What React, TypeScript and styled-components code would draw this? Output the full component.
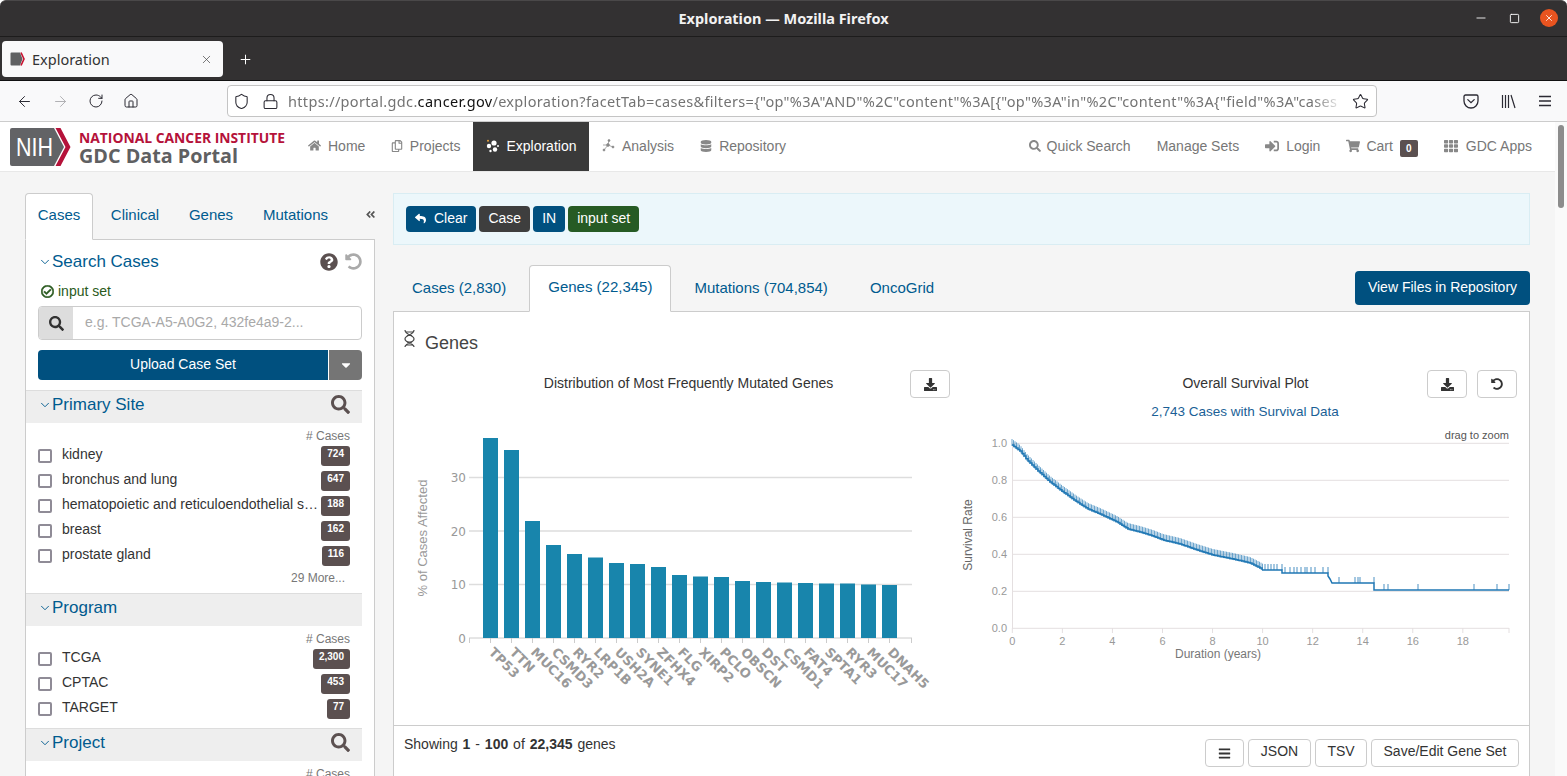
import React, { FC } from 'react'
import styled, { createGlobalStyle } from 'styled-components'
import {
	FaAngleDoubleLeft,
	FaBars,
	FaCaretDown,
	FaDatabase,
	FaDownload,
	FaHome,
	FaQuestionCircle,
	FaRegCheckCircle,
	FaRegCopy,
	FaReply,
	FaSearch,
	FaShoppingCart,
	FaSignInAlt,
	FaTh,
	FaUndoAlt,
} from 'react-icons/fa'
import { ArrowLeft, ArrowRight, ChevronDown, Home, Lock, Minus, Plus, RotateCw, Shield, Square, Star, X } from 'lucide-react'

const BLUE = '#00507f'
const LINK = '#005b8f'
const CHROME_FONT = `'Noto Sans', 'Open Sans', sans-serif`

const GlobalStyle = createGlobalStyle`
	html, body {
		margin: 0;
		height: 776px;
		overflow: hidden;
		background: #fff;
		font-family: 'Liberation Sans', Arial, sans-serif;
		font-size: 14px;
		color: #333;
	}
	* { box-sizing: border-box; }
`

/* Firefox window */
const TitleBar = styled.div`
	height: 37px;
	padding-bottom: 2px;
	background: #333132;
	border-top: 1px solid #4a4849;
	border-bottom: 1px solid #1d1c1c;
	border-radius: 6px 6px 0 0;
	display: flex;
	align-items: center;
	justify-content: center;
	position: relative;
	color: #f2f2f2;
	font: 700 14.5px ${CHROME_FONT};
`
const WindowControls = styled.div`
	position: absolute;
	right: 9px;
	top: 8px;
	display: flex;
	align-items: center;
	gap: 21px;
	color: #fff;
`
const CloseDot = styled.span`
	width: 18px;
	height: 18px;
	margin-left: -1px;
	border-radius: 50%;
	background: #e95420;
	display: flex;
	align-items: center;
	justify-content: center;
`
const TabBar = styled.div`
	height: 44px;
	background: #333132;
	border-bottom: 1px solid #111;
	display: flex;
	align-items: center;
	padding: 1px 0 0 2px;
	color: #fff;
`
const BrowserTab = styled.div`
	width: 221px;
	height: 36px;
	background: #f9f9fa;
	border-radius: 4px;
	color: #333;
	font: 14.5px ${CHROME_FONT};
	display: flex;
	align-items: center;
	padding: 0 10px 0 8px;
	gap: 6px;
	span { flex: 1; }
`
const NewTab = styled.div`
	margin-left: 15px;
	display: flex;
`
const Toolbar = styled.div`
	height: 41px;
	background: #f9f9fa;
	border-bottom: 1px solid #ccc;
	display: flex;
	align-items: center;
	padding-left: 16px;
	color: #2b2a33;
`
const ToolIcon = styled.span<{ $w: number; $dim?: boolean }>`
	width: ${p => p.$w}px;
	display: flex;
	color: ${p => (p.$dim ? '#b0b0b3' : '#2b2a33')};
`
const UrlBar = styled.div`
	width: 1150px;
	height: 32px;
	margin-left: -1px;
	background: #fff;
	border: 1px solid #c4c4c4;
	border-radius: 4px;
	display: flex;
	align-items: center;
	padding: 0 7px 0 5px;
	gap: 12px;
`
const UrlText = styled.div`
	flex: 1;
	margin: 0 -4px 0 -3px;
	white-space: nowrap;
	overflow: hidden;
	font: 14.5px ${CHROME_FONT};
	color: #737373;
	letter-spacing: 0.33px;
	-webkit-mask-image: linear-gradient(to right, #000 97%, transparent);
	mask-image: linear-gradient(to right, #000 97%, transparent);
	b { font-weight: 400; color: #111; }
`
const ToolRight = styled.div`
	display: flex;
	align-items: center;
	margin-left: 86px;
	gap: 22px;
`

/* page */
const Page = styled.div`
	display: flex;
	height: 654px;
`
const PageMain = styled.div`
	width: 1555px;
	background: #f5f5f5;
	overflow: hidden;
`
const ScrollTrack = styled.div`
	width: 12px;
	background: #fafafa;
	padding: 3px 3px 0 3px;
`
const ScrollThumb = styled.div`
	height: 83px;
	background: #8c8c8c;
	border-radius: 3px;
`
const Header = styled.header`
	height: 50px;
	background: #fff;
	border-bottom: 1px solid #e8e8e8;
	display: flex;
	align-items: stretch;
	padding-left: 10px;
`
const Logo = styled.svg`
	width: 280px;
	height: 50px;
	flex: none;
`
const Nav = styled.nav<{ $right?: boolean }>`
	display: flex;
	align-items: stretch;
	margin-left: ${p => (p.$right ? 'auto' : '5px')};
	padding-right: ${p => (p.$right ? '10px' : '0')};
`
const NavItem = styled.div<{ $active?: boolean; $px?: number; $gap?: number }>`
	display: flex;
	align-items: center;
	gap: ${p => p.$gap ?? 7}px;
	padding: 0 ${p => p.$px ?? 13}px 2px;
	color: ${p => (p.$active ? '#fff' : '#777')};
	background: ${p => (p.$active ? '#3a3a3a' : 'transparent')};
	font-size: 14px;
	svg { flex: none; }
`
const CartBadge = styled.span`
	background: #5b5050;
	color: #fff;
	font-size: 10px;
	font-weight: 700;
	border-radius: 2px;
	width: 18px;
	height: 17px;
	margin: 5px 0 0 1px;
	display: flex;
	align-items: center;
	justify-content: center;
`
const Body = styled.div`
	display: flex;
	gap: 18px;
	padding: 21px 25px 0;
`

/* left facets */
const Sidebar = styled.aside`
	width: 350px;
	flex: none;
`
const SideTabs = styled.div`
	display: flex;
	height: 47px;
	position: relative;
	z-index: 1;
`
const SideTab = styled.div<{ $active?: boolean; $w: number }>`
	width: ${p => p.$w}px;
	display: flex;
	align-items: center;
	justify-content: center;
	padding-bottom: 5px;
	font-size: 15px;
	color: ${LINK};
	background: ${p => (p.$active ? '#fff' : 'transparent')};
	border: ${p => (p.$active ? '1px solid #ccc' : '1px solid transparent')};
	border-bottom: ${p => (p.$active ? '1px solid #fff' : 'none')};
	border-radius: 4px 4px 0 0;
`
const Collapse = styled.div`
	margin-left: auto;
	display: flex;
	align-items: center;
	padding: 0 0 4px;
	margin-right: -1px;
	color: #555;
	width: 11px;
`
const SidePanel = styled.div`
	margin-top: -1px;
	background: #fff;
	border: 1px solid #ccc;
	border-bottom: none;
	height: 540px;
	overflow: hidden;
`
const SearchBlock = styled.div`
	width: 336px;
	padding: 10px 0 10px 12px;
`
const SearchHead = styled.div`
	display: flex;
	align-items: center;
	height: 22px;
	padding-top: 1px;
`
const FacetTitle = styled.div`
	flex: 1;
	display: flex;
	align-items: center;
	color: ${LINK};
	font-size: 17px;
	svg { flex: none; color: ${LINK}; margin-right: 0; }
`
const HeadIcons = styled.div`
	display: flex;
	align-items: center;
	gap: 7px;
	color: #5b5050;
`
const InputSet = styled.div`
	display: flex;
	align-items: center;
	height: 18px;
	margin: 10px 0 6px 3px;
	gap: 4px;
	color: #2a5a20;
	font-size: 14px;
	svg { stroke: currentColor; stroke-width: 24px; }
`
const SearchInput = styled.div`
	display: flex;
	height: 34px;
	border: 1px solid #ccc;
	border-radius: 4px;
	overflow: hidden;
`
const SearchAddon = styled.div`
	width: 34px;
	background: #ddd;
	display: flex;
	align-items: center;
	justify-content: center;
	color: #333;
`
const Placeholder = styled.div`
	flex: 1;
	padding-left: 12px;
	line-height: 31px;
	color: #a9a9a9;
	font-size: 14px;
	white-space: nowrap;
`
const UploadRow = styled.div`
	display: flex;
	height: 30px;
	margin-top: 10px;
`
const UploadButton = styled.div`
	flex: 1;
	background: ${BLUE};
	color: #fff;
	border-radius: 4px 0 0 4px;
	display: flex;
	align-items: center;
	justify-content: center;
	padding-bottom: 2px;
	font-size: 14px;
`
const UploadCaret = styled.div`
	width: 33px;
	margin-left: 1px;
	background: #757575;
	color: #fff;
	border-radius: 0 4px 4px 0;
	display: flex;
	align-items: center;
	justify-content: center;
`
const FacetHead = styled.div`
	width: 336px;
	height: 33px;
	background: #eee;
	border-top: 1px solid #ddd;
	padding: 0 12px 5px 12px;
	display: flex;
	align-items: center;
`
const FacetBody = styled.div<{ $pb: number }>`
	width: 336px;
	height: ${p => (p.$pb < 0 ? '14px' : 'auto')};
	overflow: hidden;
	padding: 6px 12px ${p => Math.max(p.$pb, 0)}px 12px;
`
const CasesLabel = styled.div`
	text-align: right;
	font-size: 12px;
	line-height: 14px;
	color: #777;
	margin-bottom: 3px;
`
const FacetRow = styled.div`
	display: flex;
	align-items: flex-start;
	height: 25px;
	color: #333;
`
const Check = styled.span`
	width: 14px;
	height: 14px;
	margin-top: 3px;
	border: 2px solid #8f8b96;
	border-radius: 2px;
	flex: none;
`
const RowLabel = styled.span`
	flex: 1;
	min-width: 0;
	margin-left: 10px;
	line-height: 16px;
	white-space: nowrap;
`
const CountBadge = styled.span`
	height: 20px;
	padding: 2px 6px 0;
	background: #5b5050;
	color: #fff;
	font-size: 10px;
	font-weight: 700;
	line-height: 11px;
	border-radius: 3px;
	flex: none;
`
const MoreLink = styled.div`
	text-align: right;
	padding-right: 5px;
	font-size: 12px;
	line-height: 14px;
	color: #777;
`

/* right column */
const Content = styled.main`
	flex: 1;
	min-width: 0;
`
const FilterBar = styled.div`
	height: 52px;
	background: #ecf7fb;
	border: 1px solid #d9edf3;
	display: flex;
	align-items: flex-start;
	gap: 3px;
	padding: 12px 0 0 12px;
`
const Chip = styled.div<{ $bg: string }>`
	height: 26px;
	padding: 0 9px 2px;
	background: ${p => p.$bg};
	color: #fff;
	border-radius: 4px;
	display: flex;
	align-items: center;
	gap: 8px;
`
const ViewTabs = styled.div`
	display: flex;
	height: 47px;
	margin-top: 20px;
	position: relative;
	z-index: 1;
`
const ViewTab = styled.div<{ $active?: boolean }>`
	height: 47px;
	padding: 0 18px 4px;
	margin-right: 4px;
	display: flex;
	align-items: center;
	font-size: 15px;
	color: ${LINK};
	background: ${p => (p.$active ? '#fff' : 'transparent')};
	border: 1px solid ${p => (p.$active ? '#ccc' : 'transparent')};
	border-bottom: ${p => (p.$active ? '1px solid #fff' : 'none')};
	border-radius: 4px 4px 0 0;
`
const ViewFiles = styled.div`
	margin: 6px 0 0 auto;
	width: 175px;
	height: 34px;
	padding-bottom: 2px;
	background: ${BLUE};
	color: #fff;
	border-radius: 4px;
	display: flex;
	align-items: center;
	justify-content: center;
`
const Panel = styled.section`
	margin-top: -1px;
	background: #fff;
	border: 1px solid #ccc;
	border-bottom: none;
	height: 470px;
`
const PanelHead = styled.div`
	height: 58px;
	display: flex;
	align-items: center;
	padding: 5px 0 0 9px;
	gap: 9px;
	font-size: 18px;
	color: #444;
	svg { margin-bottom: 10px; }
`
const ChartsRow = styled.div`
	height: 355px;
	display: grid;
	grid-template-columns: 547px 557px;
	column-gap: 10px;
	padding-left: 9px;
`
const ChartCol = styled.div`
	display: flex;
	flex-direction: column;
`
const ChartHead = styled.div`
	display: flex;
	align-items: flex-start;
	height: 28px;
	gap: 10px;
`
const ChartTitle = styled.div<{ $pl: number }>`
	flex: 1;
	padding-left: ${p => p.$pl}px;
	text-align: center;
	line-height: 26px;
	color: #333;
`
const ChartSub = styled.div`
	height: 26px;
	text-align: center;
	line-height: 27px;
	padding-left: 13px;
	font-size: 13.5px;
	color: #1a5f96;
`
const Btn = styled.div<{ $w: number }>`
	width: ${p => p.$w}px;
	height: 28px;
	background: #fff;
	border: 1px solid #ccc;
	border-radius: 4px;
	display: flex;
	align-items: center;
	justify-content: center;
	color: #333;
`
const FootBtn = styled(Btn)`
	padding-bottom: 4px;
`
const Chart = styled.svg`
	display: block;
	width: 100%;
	height: 300px;
`
const PanelFoot = styled.div`
	height: 60px;
	border-top: 1px solid #ccc;
	display: flex;
	align-items: flex-start;
	padding: 13px 10px 0 10px;
	b { font-weight: 700; }
`
const Showing = styled.div`
	flex: 1;
	line-height: 10px;
	word-spacing: 1px;
	white-space: pre;
`
const FootBtns = styled.div`
	display: flex;
	gap: 4px;
`

const TopBar: FC = () => (
	<>
		<TitleBar>
			Exploration — Mozilla Firefox
			<WindowControls>
				<Minus size={14} strokeWidth={1.5} />
				<Square size={11} strokeWidth={2} />
				<CloseDot>
					<X size={10} strokeWidth={2} />
				</CloseDot>
			</WindowControls>
		</TitleBar>
		<TabBar>
			<BrowserTab>
				<svg width='16' height='14' viewBox='0 0 16 14'>
					<path d='M1.5 0.5h8.5l2.5 6.5-2.5 6.5h-8.5a1 1 0 0 1-1-1v-11a1 1 0 0 1 1-1z' fill='#5f6062' />
					<path d='M11 0.5l3 6.5-3 6.5' fill='none' stroke='#c8102e' strokeWidth='1.6' />
				</svg>
				<span>Exploration</span>
				<X size={13} strokeWidth={1.3} color='#444' />
			</BrowserTab>
			<NewTab>
				<Plus size={15} strokeWidth={1.6} />
			</NewTab>
		</TabBar>
		<Toolbar>
			<ToolIcon $w={36}>
				<ArrowLeft size={17} strokeWidth={1.4} />
			</ToolIcon>
			<ToolIcon $w={36} $dim>
				<ArrowRight size={17} strokeWidth={1.4} />
			</ToolIcon>
			<ToolIcon $w={35}>
				<RotateCw size={16} strokeWidth={1.5} />
			</ToolIcon>
			<ToolIcon $w={105}>
				<Home size={16} strokeWidth={1.5} />
			</ToolIcon>
			<UrlBar>
				<Shield size={17} strokeWidth={1.5} color='#2b2a33' />
				<Lock size={17} strokeWidth={1.5} color='#2b2a33' />
				<UrlText>
					https://portal.gdc.<b>cancer.gov</b>/exploration?facetTab=cases&amp;filters={'{'}&quot;op&quot;%3A&quot;AND&quot;%2C&quot;content&quot;%3A[{'{'}&quot;op&quot;%3A&quot;in&quot;%2C&quot;content&quot;%3A{'{'}&quot;field&quot;%3A&quot;cases
				</UrlText>
				<Star size={17} strokeWidth={1.5} color='#2b2a33' />
			</UrlBar>
			<ToolRight>
				<svg width='16' height='15' viewBox='0 0 16 15' fill='none' stroke='#2b2a33' strokeWidth='1.3'>
					<path d='M2.5 1h11a1.5 1.5 0 0 1 1.5 1.5v4.5a7 7 0 0 1-14 0v-4.5a1.5 1.5 0 0 1 1.5-1.5z' />
					<path d='M4.8 5.6l3.2 3 3.2-3' strokeLinecap='round' />
				</svg>
				<svg width='15' height='15' viewBox='0 0 15 15' fill='none' stroke='#2b2a33' strokeWidth='1.2'>
					<path d='M1.5 1v13M4.5 1v13M7.5 1v13M10 1l4 13' />
				</svg>
				<svg width='14' height='12' viewBox='0 0 14 12' fill='none' stroke='#2b2a33' strokeWidth='1.3'>
					<path d='M1 1.5h12M1 6h12M1 10.5h12' />
				</svg>
			</ToolRight>
		</Toolbar>
	</>
)

const ExploreIcon: FC = () => (
	<svg width='14' height='14' viewBox='0 0 14 14' fill='#fff'>
		<circle cx='9' cy='4' r='2.6' />
		<circle cx='4' cy='7' r='2.2' />
		<circle cx='10' cy='10.5' r='2.2' />
		<circle cx='3' cy='1.8' r='1' fill='#e9a23b' />
		<circle cx='5.5' cy='12' r='1.2' />
		<circle cx='13' cy='7' r='1' />
	</svg>
)

const AnalysisIcon: FC = () => (
	<svg width='13' height='13' viewBox='0 0 13 13' fill='#888' stroke='#888' strokeWidth='0.7'>
		<path d='M2 11L6 6l5 2M6 6l1-5M6 6L1 6' fill='none' />
		<circle cx='6' cy='6' r='1.4' />
		<circle cx='2' cy='11' r='1' />
		<circle cx='11' cy='8' r='1' />
		<circle cx='7' cy='1.5' r='1' />
	</svg>
)

const SiteHeader: FC = () => (
	<Header>
		<Logo viewBox='10 122 280 50'>
			<path d='M12 128h42l10 19-10 19H12a2 2 0 0 1-2-2v-34a2 2 0 0 1 2-2z' fill='#626366' />
			<path d='M55.5 128h5l10 19-10 19h-5l10-19z' fill='#b5123a' />
			<text x='16' y='156' fill='#fff' fontSize='25' fontFamily='Liberation Sans' textLength='37' lengthAdjust='spacingAndGlyphs'>
				NIH
			</text>
			<text x='79' y='143' fill='#b5123a' fontSize='13.5' fontWeight='700' fontFamily='Open Sans' textLength='206' lengthAdjust='spacingAndGlyphs'>
				NATIONAL CANCER INSTITUTE
			</text>
			<text x='79' y='163' fill='#5f6062' fontSize='20' fontWeight='700' fontFamily='Open Sans' textLength='159' lengthAdjust='spacingAndGlyphs'>
				GDC Data Portal
			</text>
		</Logo>
		<Nav>
			<NavItem>
				<FaHome size={13} color='#888' />
				Home
			</NavItem>
			<NavItem $px={12.5}>
				<FaRegCopy size={12} color='#888' />
				Projects
			</NavItem>
			<NavItem $active $px={12.5}>
				<ExploreIcon />
				Exploration
			</NavItem>
			<NavItem>
				<AnalysisIcon />
				Analysis
			</NavItem>
			<NavItem>
				<FaDatabase size={12} color='#888' />
				Repository
			</NavItem>
		</Nav>
		<Nav $right>
			<NavItem $gap={6}>
				<FaSearch size={12} color='#888' />
				Quick Search
			</NavItem>
			<NavItem>Manage Sets</NavItem>
			<NavItem>
				<FaSignInAlt size={14} color='#888' />
				Login
			</NavItem>
			<NavItem $gap={6}>
				<FaShoppingCart size={14} color='#888' />
				Cart
				<CartBadge>0</CartBadge>
			</NavItem>
			<NavItem $gap={8}>
				<FaTh size={14} color='#888' />
				GDC Apps
			</NavItem>
		</Nav>
	</Header>
)

interface FacetProps {
	title: string
	rows: [string, string][]
	more?: string
	search?: boolean
	pb: number
}

const Facet: FC<FacetProps> = ({ title, rows, more, search, pb }) => (
	<>
		<FacetHead>
			<FacetTitle>
				<ChevronDown size={14} strokeWidth={1.6} />
				{title}
			</FacetTitle>
			{search && <FaSearch size={19} color='#5b5050' />}
		</FacetHead>
		<FacetBody $pb={pb}>
			<CasesLabel># Cases</CasesLabel>
			{rows.map(([label, count]) => (
				<FacetRow key={label}>
					<Check />
					<RowLabel>{label}</RowLabel>
					<CountBadge>{count}</CountBadge>
				</FacetRow>
			))}
			{more && <MoreLink>{more}</MoreLink>}
		</FacetBody>
	</>
)

const SideColumn: FC = () => (
	<Sidebar>
		<SideTabs>
			<SideTab $active $w={68}>
				Cases
			</SideTab>
			<SideTab $w={84}>Clinical</SideTab>
			<SideTab $w={68}>Genes</SideTab>
			<SideTab $w={101}>Mutations</SideTab>
			<Collapse>
				<FaAngleDoubleLeft size={11} />
			</Collapse>
		</SideTabs>
		<SidePanel>
			<SearchBlock>
				<SearchHead>
					<FacetTitle>
						<ChevronDown size={14} strokeWidth={1.6} />
						Search Cases
					</FacetTitle>
					<HeadIcons>
						<FaQuestionCircle size={18} />
						<FaUndoAlt size={17} color='#aaa' />
					</HeadIcons>
				</SearchHead>
				<InputSet>
					<FaRegCheckCircle size={13} />
					input set
				</InputSet>
				<SearchInput>
					<SearchAddon>
						<FaSearch size={15} />
					</SearchAddon>
					<Placeholder>e.g. TCGA-A5-A0G2, 432fe4a9-2...</Placeholder>
				</SearchInput>
				<UploadRow>
					<UploadButton>Upload Case Set</UploadButton>
					<UploadCaret>
						<FaCaretDown size={14} />
					</UploadCaret>
				</UploadRow>
			</SearchBlock>
			<Facet
				title='Primary Site'
				search
				pb={8}
				rows={[
					['kidney', '724'],
					['bronchus and lung', '647'],
					['hematopoietic and reticuloendothelial s…', '188'],
					['breast', '162'],
					['prostate gland', '116'],
				]}
				more='29 More...'
			/>
			<Facet
				title='Program'
				pb={4}
				rows={[
					['TCGA', '2,300'],
					['CPTAC', '453'],
					['TARGET', '77'],
				]}
			/>
			<Facet title='Project' search pb={0} rows={[]} />
		</SidePanel>
	</Sidebar>
)

const genes: [string, number][] = [
	['TP53', 438],
	['TTN', 450],
	['MUC16', 521],
	['CSMD3', 545],
	['RYR2', 554],
	['LRP1B', 557.5],
	['USH2A', 563],
	['SYNE1', 564],
	['ZFHX4', 567],
	['FLG', 575],
	['XIRP2', 576.5],
	['PCLO', 577],
	['OBSCN', 581],
	['DST', 582],
	['CSMD1', 582.5],
	['FAT4', 583],
	['SPTA1', 583.5],
	['RYR3', 583.5],
	['MUC17', 584.5],
	['DNAH5', 585],
]

const BarChart: FC = () => (
	<Chart viewBox='403 424 547 300'>
		{[0, 10, 20, 30].map(v => {
			const y = 638 - v * 5.35
			return (
				<g key={v}>
					<line x1={469} x2={912} y1={y} y2={y} stroke={v === 0 ? '#ccc' : '#ddd'} strokeWidth={v === 0 ? 1 : 1.5} />
					<text x={466} y={y + 4.5} textAnchor='end' fontSize={12} fill='#999' fontFamily='DejaVu Sans'>
						{v}
					</text>
				</g>
			)
		})}
		<path d='M469.5 638v5M911.5 638v5' stroke='#ccc' />
		<text
			transform='translate(427 538) rotate(-90)'
			textAnchor='middle'
			fontSize={13}
			fill='#999'
			fontFamily='Liberation Sans'
		>
			% of Cases Affected
		</text>
		{genes.map(([name, top], i) => {
			const x = 483 + i * 21
			return (
				<g key={name}>
					<rect x={x} y={top} width={15} height={638 - top} fill='#1885ac' />
					<line x1={x + 7.5} x2={x + 7.5} y1={638} y2={643} stroke='#ccc' />
					<text
						transform={`translate(${x + 5} 653) rotate(45)`}
						fontSize={13}
						fontWeight={700}
						fill='#999'
						fontFamily='DejaVu Sans'
					>
						{name}
					</text>
				</g>
			)
		})}
	</Chart>
)

// curve read off the reference, in page pixels
const curve: [number, number][] = [
	[1012, 445],
	[1020, 451],
	[1027, 460],
	[1037, 470],
	[1050, 482],
	[1063, 492],
	[1077, 502],
	[1088, 509],
	[1100, 514],
	[1117, 522],
	[1128, 529],
	[1140, 532],
	[1153, 536],
	[1163, 540],
	[1180, 544],
	[1197, 550],
	[1213, 555],
	[1233, 559],
	[1250, 563],
	[1260, 568],
	[1263, 570],
]
const tail: [number, number][] = [
	[1263, 570],
	[1282, 570],
	[1282, 573],
	[1328, 573],
	[1328, 576],
	[1330, 579],
	[1332, 583],
	[1374, 583],
	[1374, 590],
	[1509, 590],
]
const tailTicks = [
	1265, 1268, 1271, 1274, 1277, 1282, 1285, 1290, 1294, 1297, 1301, 1305, 1307, 1311, 1315, 1323, 1328, 1339, 1355, 1358,
	1360, 1374, 1384, 1388, 1418, 1474, 1497, 1509,
]

const yAt = (pts: [number, number][], x: number): number => {
	for (let i = 1; i < pts.length; i++) {
		if (x <= pts[i][0]) {
			const [x0, y0] = pts[i - 1]
			const [x1, y1] = pts[i]
			return x1 === x0 ? y1 : y0 + ((y1 - y0) * (x - x0)) / (x1 - x0)
		}
	}
	return pts[pts.length - 1][1]
}

const stepPath = (): string => {
	let d = `M${curve[0][0]} ${curve[0][1]}`
	for (let x = 1014; x <= 1263; x += 2) d += `H${x}V${yAt(curve, x).toFixed(1)}`
	tail.forEach(([x, y]) => (d += `L${x} ${y}`))
	return d
}

const denseTicks: number[] = []
for (let x = 1012; x < 1263; x += 1.5) denseTicks.push(x)

const SurvivalChart: FC = () => (
	<Chart viewBox='960 424 557 300'>
		{[1, 0.8, 0.6, 0.4, 0.2, 0].map(v => {
			const y = 628.3 - v * 185
			return (
				<g key={v}>
					<line x1={1012} x2={1509} y1={y} y2={y} stroke='#e4dfe0' />
					<text x={1007} y={y + 4} textAnchor='end' fontSize={11} fill='#999' fontFamily='Liberation Sans'>
						{v.toFixed(1)}
					</text>
				</g>
			)
		})}
		<line x1={1012.5} x2={1012.5} y1={443} y2={628} stroke='#e4dfe0' />
		{[0, 2, 4, 6, 8, 10, 12, 14, 16, 18].map(v => {
			const x = 1012.3 + v * 25.03
			return (
				<g key={v}>
					<line x1={x} x2={x} y1={628} y2={633} stroke='#e4dfe0' />
					<text x={x} y={645} textAnchor='middle' fontSize={11} fill='#999' fontFamily='Liberation Sans'>
						{v}
					</text>
				</g>
			)
		})}
		<line x1={1509} x2={1509} y1={628} y2={633} stroke='#e4dfe0' />
		<text x={1218} y={658} textAnchor='middle' fontSize={12} fill='#777' fontFamily='Liberation Sans'>
			Duration (years)
		</text>
		<text
			transform='translate(972 535) rotate(-90)'
			textAnchor='middle'
			fontSize={12}
			fill='#666'
			fontFamily='Liberation Sans'
		>
			Survival Rate
		</text>
		<text x={1509} y={439} textAnchor='end' fontSize={11} fill='#555' fontFamily='Liberation Sans'>
			drag to zoom
		</text>
		{denseTicks.map(x => {
			const y = yAt(curve, x)
			return <line key={x} x1={x} x2={x} y1={y - 6} y2={y + 1} stroke='#1f77b4' strokeOpacity={0.65} strokeWidth={1} />
		})}
		{tailTicks.map(x => {
			const y = yAt(tail, x)
			return <line key={x} x1={x} x2={x} y1={y - 6} y2={y} stroke='#1f77b4' strokeOpacity={0.8} />
		})}
		<path d={stepPath()} fill='none' stroke='#1f77b4' strokeWidth={1.5} />
	</Chart>
)

const MainColumn: FC = () => (
	<Content>
		<FilterBar>
			<Chip $bg={BLUE}>
				<FaReply size={11} />
				Clear
			</Chip>
			<Chip $bg='#3e3e3e'>Case</Chip>
			<Chip $bg={BLUE}>IN</Chip>
			<Chip $bg='#265b24'>input set</Chip>
		</FilterBar>
		<ViewTabs>
			<ViewTab>Cases (2,830)</ViewTab>
			<ViewTab $active>Genes (22,345)</ViewTab>
			<ViewTab>Mutations (704,854)</ViewTab>
			<ViewTab>OncoGrid</ViewTab>
			<ViewFiles>View Files in Repository</ViewFiles>
		</ViewTabs>
		<Panel>
			<PanelHead>
				<svg width='13' height='19' viewBox='0 0 13 19' fill='none' stroke='#444' strokeWidth='1.2'>
					<path d='M2 1c0 5 9 5 9 9s-9 4-9 8M11 1c0 5-9 5-9 9s9 4 9 8' />
					<path d='M3 3h7M4 6.5h5M4 13h5M3 16h7' strokeWidth='1' />
				</svg>
				Genes
			</PanelHead>
			<ChartsRow>
				<ChartCol>
					<ChartHead>
						<ChartTitle $pl={74}>Distribution of Most Frequently Mutated Genes</ChartTitle>
						<Btn $w={40}>
							<FaDownload size={13} />
						</Btn>
					</ChartHead>
					<ChartSub />
					<BarChart />
				</ChartCol>
				<ChartCol>
					<ChartHead>
						<ChartTitle $pl={114}>Overall Survival Plot</ChartTitle>
						<Btn $w={40}>
							<FaDownload size={13} />
						</Btn>
						<Btn $w={40}>
							<FaUndoAlt size={12} />
						</Btn>
					</ChartHead>
					<ChartSub>2,743 Cases with Survival Data</ChartSub>
					<SurvivalChart />
				</ChartCol>
			</ChartsRow>
			<PanelFoot>
				<Showing>
					Showing <b>1</b> - <b>100</b> of <b>22,345</b> genes
				</Showing>
				<FootBtns>
					<Btn $w={39}>
						<FaBars size={13} />
					</Btn>
					<FootBtn $w={63}>JSON</FootBtn>
					<FootBtn $w={52}>TSV</FootBtn>
					<FootBtn $w={148}>Save/Edit Gene Set</FootBtn>
				</FootBtns>
			</PanelFoot>
		</Panel>
	</Content>
)

const App: FC = () => (
	<>
		<GlobalStyle />
		<TopBar />
		<Page>
			<PageMain>
				<SiteHeader />
				<Body>
					<SideColumn />
					<MainColumn />
				</Body>
			</PageMain>
			<ScrollTrack>
				<ScrollThumb />
			</ScrollTrack>
		</Page>
	</>
)

export default App
